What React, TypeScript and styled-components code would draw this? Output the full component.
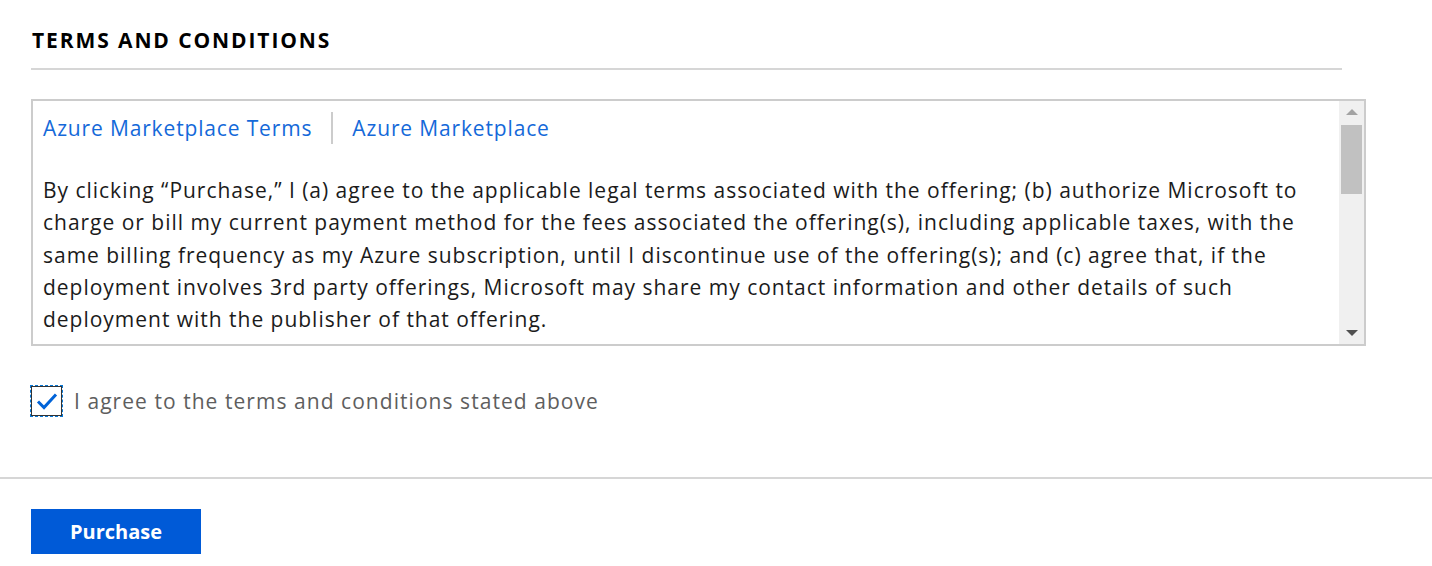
import styled, { createGlobalStyle } from 'styled-components'

const GlobalStyle = createGlobalStyle`
  html, body {
    margin: 0;
    padding: 0;
    background: #ffffff;
  }

  body {
    font-family: 'Open Sans', 'Noto Sans', 'Liberation Sans', sans-serif;
  }
`

const Page = styled.div`
  display: flex;
  flex-direction: column;
  height: 566px;
  overflow: hidden;
  width: 1432px;
`

const Section = styled.section`
  display: flex;
  flex-direction: column;
  padding: 24px 66px 0 31px;
`

const Title = styled.h2`
  border-bottom: 2px solid #d6d6d6;
  color: #000000;
  font-size: 21px;
  font-weight: 700;
  letter-spacing: 1.9px;
  line-height: 32px;
  margin: 0 24px 0 0;
  padding: 0 0 12px 1px;
`

const TermsBox = styled.div`
  border: 2px solid #cccccc;
  display: flex;
  height: 243px;
  margin-top: 29px;
  overflow: hidden;
`

const TermsContent = styled.div`
  flex: 1;
  letter-spacing: 0.98px;
  padding: 10px 10px 0 10px;
`

const LinkRow = styled.div`
  align-items: center;
  display: flex;
  height: 34px;
`

const TermsLink = styled.a`
  color: #1469d9;
  font-size: 21px;
  letter-spacing: 0.85px;
  line-height: 30px;
  text-decoration: none;
`

const Separator = styled.span`
  background: #cccccc;
  height: 32px;
  margin: 0 19px 0 19px;
  width: 2px;
`

const Paragraph = styled.p`
  color: #1b1b1b;
  font-size: 21px;
  line-height: 32.3px;
  margin: 29px 0 0 0;
`

const Scrollbar = styled.div`
  background: #f0f0f0;
  display: flex;
  flex-direction: column;
  flex-shrink: 0;
  width: 25px;
`

const Arrow = styled.div<{ $down?: boolean }>`
  align-items: center;
  display: flex;
  height: 22px;
  justify-content: center;

  &::before {
    border-left: 6px solid transparent;
    border-right: 6px solid transparent;
    ${({ $down }) =>
      $down ? 'border-top: 6px solid #505050;' : 'border-bottom: 6px solid #a3a3a3;'}
    content: '';
  }
`

const Track = styled.div`
  flex: 1;
  padding: 2px 2px 0 2px;
`

const Thumb = styled.div`
  background: #c1c1c1;
  height: 69px;
`

const AgreeRow = styled.label`
  align-items: center;
  display: flex;
  gap: 12px;
  margin-top: 38px;
`

const CheckBox = styled.span`
  align-items: center;
  border: 1px solid #333333;
  box-sizing: border-box;
  display: flex;
  height: 30px;
  justify-content: center;
  outline: 1px dashed #0a78d4;
  outline-offset: 0;
  width: 31px;
`

const AgreeText = styled.span`
  color: #5e5e5e;
  font-size: 21px;
  letter-spacing: 1.05px;
  line-height: 32px;
  margin-top: 1px;
`

const Footer = styled.footer`
  border-top: 2px solid #d6d6d6;
  margin-top: 60px;
  padding: 30px 31px 0 31px;
`

const PurchaseButton = styled.button`
  background: #005ad7;
  border: none;
  color: #ffffff;
  font-family: inherit;
  font-size: 20px;
  font-weight: 700;
  height: 45px;
  padding: 0;
  width: 170px;
`

export default function App() {
  return (
    <Page>
      <GlobalStyle />
      <Section>
        <Title>TERMS AND CONDITIONS</Title>
        <TermsBox>
          <TermsContent>
            <LinkRow>
              <TermsLink href="#">Azure Marketplace Terms</TermsLink>
              <Separator />
              <TermsLink href="#">Azure Marketplace</TermsLink>
            </LinkRow>
            <Paragraph>
              By clicking “Purchase,” I (a) agree to the applicable legal terms associated with the
              offering; (b) authorize Microsoft to charge or bill my current payment method for the
              fees associated the offering(s), including applicable taxes, with the same billing
              frequency as my Azure subscription, until I discontinue use of the offering(s); and (c)
              agree that, if the deployment involves 3rd party offerings, Microsoft may share my
              contact information and other details of such deployment with the publisher of that
              offering.
            </Paragraph>
          </TermsContent>
          <Scrollbar>
            <Arrow />
            <Track>
              <Thumb />
            </Track>
            <Arrow $down />
          </Scrollbar>
        </TermsBox>
        <AgreeRow>
          <CheckBox>
            <svg width="22" height="18" viewBox="0 0 22 18">
              <path d="M2 9.5 L8 15.5 L20 2.5" fill="none" stroke="#0063d8" strokeWidth="3" />
            </svg>
          </CheckBox>
          <AgreeText>I agree to the terms and conditions stated above</AgreeText>
        </AgreeRow>
      </Section>
      <Footer>
        <PurchaseButton>Purchase</PurchaseButton>
      </Footer>
    </Page>
  )
}
